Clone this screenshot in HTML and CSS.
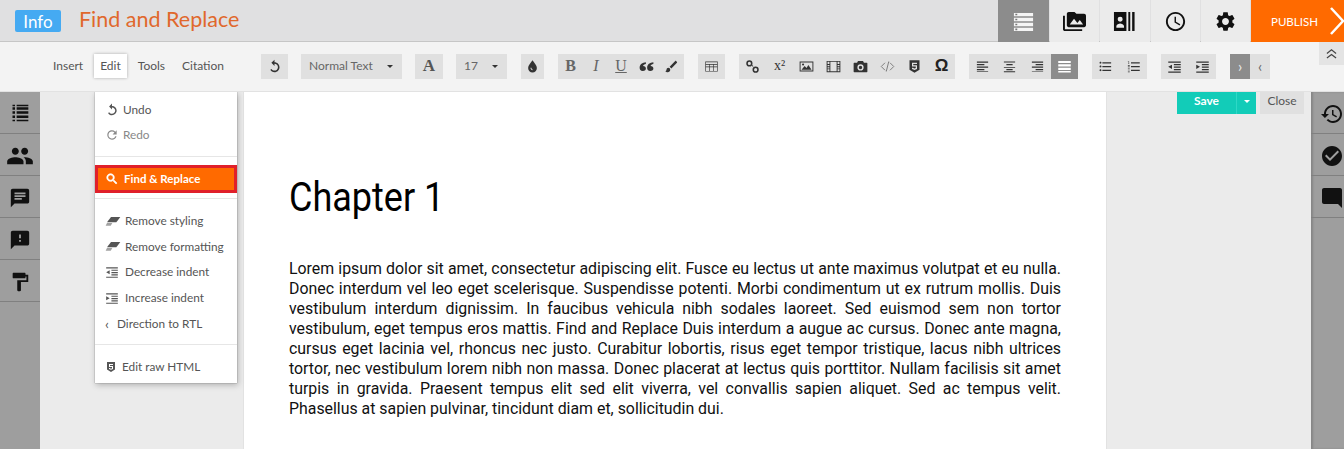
FILE: index.html
```html
<!DOCTYPE html>
<html lang="en">
<head>
    <meta charset="UTF-8">
    <meta name="viewport" content="width=device-width, initial-scale=1.0">
    <title>Find and Replace</title>
    <link rel="stylesheet" href="styles.css">
</head>
<body>
    <svg class="defs" aria-hidden="true">
        <symbol id="i-toc" viewBox="0 0 24 24"><path d="M2 3h20v3.6H2zM2 8.2h20v3.6H2zM2 13.4h20V17H2zM2 18.6h20v3.4H2z"/><path fill="#777" d="M3.5 4h2v1.6h-2zM3.5 9.2h2v1.6h-2zM3.5 14.4h2V16h-2zM3.5 19.4h2V21h-2z"/></symbol>
        <symbol id="i-list" viewBox="0 0 24 24"><path d="M3 5h3v3H3zM8 5h14v3H8zM3 10h3v3H3zM8 10h14v3H8zM3 15h3v3H3zM8 15h14v3H8zM3 20h3v2H3zM8 20h14v2H8zM3 2h3v2H3zM8 2h14v2H8z"/></symbol>
        <symbol id="i-media" viewBox="0 0 24 24"><path d="M2 6H0v5h.01L0 20c0 1.1.9 2 2 2h18v-2H2V6zm20-2h-8l-2-2H6c-1.1 0-1.99.9-1.99 2L4 16c0 1.1.9 2 2 2h16c1.1 0 2-.9 2-2V6c0-1.1-.9-2-2-2zM7 15l4.5-6 3.5 4.51 2.5-3.01L21 15H7z"/></symbol>
        <symbol id="i-contacts" viewBox="0 0 24 24"><path fill-rule="evenodd" d="M1 2h13v20H1zM7.5 7a2.6 2.6 0 1 0 0 5.2a2.6 2.6 0 0 0 0-5.2zM3.5 17v1.5h8V17c0-1.8-2.7-2.8-4-2.8s-4 1-4 2.8z"/><path d="M16 2h2v20h-2zM20 2h2.5v20H20z"/></symbol>
        <symbol id="i-clock" viewBox="0 0 24 24"><path d="M11.99 2C6.47 2 2 6.48 2 12s4.47 10 9.99 10C17.52 22 22 17.52 22 12S17.52 2 11.99 2zM12 20c-4.42 0-8-3.58-8-8s3.58-8 8-8 8 3.58 8 8-3.58 8-8 8zm.5-13H11v6l5.25 3.15.75-1.23-4.5-2.67z"/></symbol>
        <symbol id="i-cog" viewBox="0 0 24 24"><path d="M19.14 12.94c.04-.3.06-.61.06-.94 0-.32-.02-.64-.07-.94l2.03-1.58c.18-.14.23-.41.12-.61l-1.92-3.32c-.12-.22-.37-.29-.59-.22l-2.39.96c-.5-.38-1.03-.7-1.62-.94l-.36-2.54c-.04-.24-.24-.41-.48-.41h-3.84c-.24 0-.43.17-.47.41l-.36 2.54c-.59.24-1.13.57-1.62.94l-2.39-.96c-.22-.08-.47 0-.59.22L2.74 8.87c-.12.21-.08.47.12.61l2.03 1.58c-.05.3-.09.63-.09.94s.02.64.07.94l-2.03 1.58c-.18.14-.23.41-.12.61l1.92 3.32c.12.22.37.29.59.22l2.39-.96c.5.38 1.03.7 1.62.94l.36 2.54c.05.24.24.41.48.41h3.84c.24 0 .44-.17.47-.41l.36-2.54c.59-.24 1.13-.56 1.62-.94l2.39.96c.22.08.47 0 .59-.22l1.92-3.32c.12-.22.07-.47-.12-.61l-2.01-1.58zM12 15.6c-1.98 0-3.6-1.62-3.6-3.6s1.62-3.6 3.6-3.6 3.6 1.62 3.6 3.6-1.62 3.6-3.6 3.6z"/></symbol>
        <symbol id="i-people" viewBox="0 0 24 24"><path d="M16 11c1.66 0 2.99-1.34 2.99-3S17.66 5 16 5c-1.66 0-3 1.34-3 3s1.34 3 3 3zm-8 0c1.66 0 2.99-1.34 2.99-3S9.66 5 8 5C6.34 5 5 6.34 5 8s1.34 3 3 3zm0 2c-2.33 0-7 1.17-7 3.5V19h14v-2.5c0-2.33-4.67-3.5-7-3.5zm8 0c-.29 0-.62.02-.97.05 1.16.84 1.97 1.97 1.97 3.45V19h6v-2.5c0-2.33-4.67-3.5-7-3.5z"/></symbol>
        <symbol id="i-chat" viewBox="0 0 24 24"><path d="M20 2H4c-1.1 0-1.99.9-1.99 2L2 22l4-4h14c1.1 0 2-.9 2-2V4c0-1.1-.9-2-2-2zM6 9h12v2H6V9zm8 5H6v-2h8v2zm4-6H6V6h12v2z"/></symbol>
        <symbol id="i-feedback" viewBox="0 0 24 24"><path d="M20 2H4c-1.1 0-1.99.9-1.99 2L2 22l4-4h14c1.1 0 2-.9 2-2V4c0-1.1-.9-2-2-2zm-7 12h-2v-2h2v2zm0-4h-2V6h2v4z"/></symbol>
        <symbol id="i-paint" viewBox="0 0 24 24"><path d="M18 4V3c0-.55-.45-1-1-1H5c-.55 0-1 .45-1 1v4c0 .55.45 1 1 1h12c.55 0 1-.45 1-1V6h1v4H9v11c0 .55.45 1 1 1h2c.55 0 1-.45 1-1v-9h8V4h-3z"/></symbol>
        <symbol id="i-history" viewBox="0 0 24 24"><path d="M13 3c-4.97 0-9 4.03-9 9H1l3.89 3.89.07.14L9 12H6c0-3.87 3.13-7 7-7s7 3.13 7 7-3.13 7-7 7c-1.93 0-3.68-.79-4.94-2.06l-1.42 1.42C8.27 19.99 10.51 21 13 21c4.97 0 9-4.03 9-9s-4.03-9-9-9zm-1 5v5l4.28 2.54.72-1.21-3.5-2.08V8H12z"/></symbol>
        <symbol id="i-check" viewBox="0 0 24 24"><path d="M12 2C6.48 2 2 6.48 2 12s4.48 10 10 10 10-4.48 10-10S17.52 2 12 2zm-2 15l-5-5 1.41-1.41L10 14.17l7.59-7.59L19 8l-9 9z"/></symbol>
        <symbol id="i-bubble" viewBox="0 0 24 24"><path d="M4 2h16c1.1 0 2 .9 2 2v18l-4-4H4c-1.1 0-2-.9-2-2V4c0-1.1.9-2 2-2z"/></symbol>
        <symbol id="i-undo" viewBox="0 0 24 24"><path d="M12 5V1L7 6l5 5V7.5c3 0 5.5 2.5 5.5 5.5s-2.5 5.5-5.5 5.5c-2 0-3.8-1.1-4.7-2.7l-2 1.2C6.5 19.5 9 21 12 21c4.4 0 8-3.6 8-8s-3.6-8-8-8z"/></symbol>
        <symbol id="i-redo" viewBox="0 0 24 24"><path d="M17.65 6.35A7.96 7.96 0 0 0 12 4c-4.42 0-8 3.58-8 8s3.58 8 8 8c3.73 0 6.84-2.55 7.73-6h-2.08A6 6 0 1 1 12 6c1.66 0 3.14.69 4.22 1.78L13 11h7V4l-2.35 2.35z"/></symbol>
        <symbol id="i-search" viewBox="0 0 24 24"><path d="M15.5 14h-.79l-.28-.27C15.41 12.59 16 11.11 16 9.5 16 5.91 13.09 3 9.5 3S3 5.91 3 9.5 5.91 16 9.5 16c1.61 0 3.09-.59 4.23-1.57l.27.28v.79l5 4.99L20.49 19l-4.99-5zm-6 0C7.01 14 5 11.99 5 9.5S7.01 5 9.5 5 14 7.01 14 9.5 11.99 14 9.5 14z" stroke="currentColor" stroke-width="1.2"/></symbol>
        <symbol id="i-eraser" viewBox="0 0 24 24"><path d="M9 6h14l-6 8H3z"/><path d="M3 15h8l-2.5 4H1z" opacity=".55"/></symbol>
        <symbol id="i-outdent" viewBox="0 0 24 24"><path d="M2 4h20v2H2zM11 8h11v2H11zM11 12h11v2H11zM11 16h11v2H11zM2 20h20v2H2zM8 9v7l-6-3.5z"/></symbol>
        <symbol id="i-indent" viewBox="0 0 24 24"><path d="M2 4h20v2H2zM11 8h11v2H11zM11 12h11v2H11zM11 16h11v2H11zM2 20h20v2H2zM2 9v7l6-3.5z"/></symbol>
        <symbol id="i-html5" viewBox="0 0 24 24"><path fill-rule="evenodd" d="M4 2h16v15l-8 5-8-5zM8 6v6h6v2.5l-2 .8-2-.8V14H8v2l4 1.5 4-1.5v-6h-6V8h6V6z"/></symbol>
        <symbol id="i-drop" viewBox="0 0 24 24"><path d="M12 2c3 4.5 7 8 7 12.5A7 7 0 0 1 5 14.5C5 10 9 6.5 12 2zm-3.2 12c0 2 1.3 3.6 3.2 3.8v-1.6c-1 0-1.7-1.2-1.7-2.2z" fill-rule="evenodd"/></symbol>
        <symbol id="i-quote" viewBox="0 0 24 24"><path d="M11 5C5.5 5.5 1 8.5 1 13.5 1 17 2.5 19 6 19s5-1.8 5-4-1.6-3.8-4.5-3.8c.3-1.500 2-2.700 4.500-3.200zM23 5c-5.500.5-10 3.500-10 8.500 0 3.500 1.500 5.500 5 5.500s5-1.800 5-4-1.600-3.800-4.500-3.800c.3-1.500 2-2.700 4.500-3.200z"/></symbol>
        <symbol id="i-brush" viewBox="0 0 24 24"><path d="M7 14c-1.66 0-3 1.34-3 3 0 1.31-1.16 2-2 2 .92 1.22 2.49 2 4 2 2.21 0 4-1.79 4-4 0-1.66-1.34-3-3-3zm13.71-9.37l-1.34-1.34c-.39-.39-1.02-.39-1.41 0L9 12.25 11.75 15l8.96-8.96c.39-.39.39-1.02 0-1.41z"/></symbol>
        <symbol id="i-table" viewBox="0 0 24 24"><path fill-rule="evenodd" d="M2 4h20v16H2zM3 5v3h18V5zM3 9v3h5.5V9zm6.5 0v3h5V9zm6 0v3H21V9zM3 13v6h5.5v-6zm6.5 0v6h5v-6zm6 0v6H21v-6z"/></symbol>
        <symbol id="i-link" viewBox="0 0 24 24"><path fill-rule="evenodd" d="M7 2a5 5 0 1 1 0 10A5 5 0 0 1 7 2zm0 2.5a2.5 2.5 0 1 0 0 5 2.5 2.5 0 0 0 0-5zM17 12a5 5 0 1 1 0 10 5 5 0 0 1 0-10zm0 2.5a2.5 2.5 0 1 0 0 5 2.5 2.5 0 0 0 0-5z"/><path d="M10.5 10.5l2 2 1-1-2-2z"/></symbol>
        <symbol id="i-photo" viewBox="0 0 24 24"><path fill-rule="evenodd" d="M1 4h22v16H1zM2.5 5.5v13h19v-13zM4 17l5-6 3 3.5 3-5 5 7.5zM6.5 7a1.7 1.7 0 1 1 0 3.4 1.7 1.7 0 0 1 0-3.4z"/></symbol>
        <symbol id="i-film" viewBox="0 0 24 24"><path fill-rule="evenodd" d="M1 3h22v18H1zM2.500 4.500V8h3V4.500zm0 5v2h3v-2zm0 3.500v2h3v-2zm0 3.500v3h3v-3zm4.500-12v15h10v-15zm11.500 0V8h3V4.500zm0 5v2h3v-2zm0 3.500v2h3v-2zm0 3.500v3h3v-3z"/></symbol>
        <symbol id="i-camera" viewBox="0 0 24 24"><path fill-rule="evenodd" d="M8 3h8l1.500 3H22a1 1 0 0 1 1 1v13a1 1 0 0 1-1 1H2a1 1 0 0 1-1-1V7a1 1 0 0 1 1-1h4.500zm4 5.500a5 5 0 1 0 0 10 5 5 0 0 0 0-10zm0 2.300a2.700 2.700 0 1 1 0 5.400 2.700 2.700 0 0 1 0-5.400z"/></symbol>
        <symbol id="i-code" viewBox="0 0 24 24"><path d="M8 6L2 12l6 6M16 6l6 6-6 6M14 4l-4 16" fill="none" stroke="currentColor" stroke-width="1.5"/></symbol>
        <symbol id="i-left" viewBox="0 0 24 24"><path d="M3 4h18v2H3zM3 8h12v2H3zM3 12h18v2H3zM3 16h12v2H3z"/><path d="M3 19.5h18v1H3z"/></symbol>
        <symbol id="i-center" viewBox="0 0 24 24"><path d="M3 4h18v1.500H3zM7 8h10v2H7zM3 13h18v1.500H3zM7 16h10v2H7zM3 19.500h18v1.500H3z"/></symbol>
        <symbol id="i-right" viewBox="0 0 24 24"><path d="M3 4h18v2H3zM9 8h12v2H9zM3 12h18v2H3zM9 16h12v2H9zM3 19.5h18v1H3z"/></symbol>
        <symbol id="i-justify" viewBox="0 0 24 24"><path d="M2 3h20v3.5H2zM2 8.5h20V12H2zM2 14h20v3.5H2zM2 19h20v2.5H2z"/></symbol>
        <symbol id="i-bullets" viewBox="0 0 24 24"><path d="M4 10.5c-.83 0-1.5.67-1.5 1.5s.67 1.5 1.5 1.5 1.5-.67 1.5-1.5-.67-1.5-1.5-1.5zm0-6c-.83 0-1.5.67-1.5 1.5S3.17 7.5 4 7.5 5.5 6.83 5.5 6 4.83 4.5 4 4.5zm0 12c-.83 0-1.5.68-1.5 1.5s.68 1.5 1.5 1.5 1.5-.68 1.5-1.5-.67-1.5-1.5-1.5zM7 19h14v-2H7v2zm0-6h14v-2H7v2zm0-8v2h14V5H7z"/></symbol>
        <symbol id="i-numbers" viewBox="0 0 24 24"><path d="M3 3h2v1H3zM4 5h1v3H4zM3 10h3v1H3zM3 12h3v1H3zM3 15h3v1H3zM3 17h3v1H3zM3 20h3v1H3zM8 5h14v2H8zM8 11h14v2H8zM8 17h14v2H8z"/></symbol>
    </svg>

    <div class="topbar">
        <span class="info-badge">Info</span>
        <span class="page-title">Find and Replace</span>
        <div class="top-tabs">
            <a class="top-tab active"><svg class="white"><use href="#i-toc"/></svg></a>
            <a class="top-tab"><svg><use href="#i-media"/></svg></a>
            <a class="top-tab"><svg><use href="#i-contacts"/></svg></a>
            <a class="top-tab"><svg><use href="#i-clock"/></svg></a>
            <a class="top-tab"><svg><use href="#i-cog"/></svg></a>
            <a class="publish">PUBLISH
                <svg viewBox="0 0 14 28"><path d="M1 1l12 13L1 27" fill="none" stroke="#fff" stroke-width="2.5"/></svg>
            </a>
        </div>
    </div>

    <div class="toolbar">
        <div class="menu-tabs">
            <a>Insert</a>
            <a class="active">Edit</a>
            <a>Tools</a>
            <a>Citation</a>
        </div>
        <div class="tb-groups">
            <div class="tb-group tight w-27"><a><svg><use href="#i-undo"/></svg></a></div>
            <div class="tb-group tight w-101"><a class="select">Normal Text<i class="caret"></i></a></div>
            <div class="tb-group tight w-28"><a class="glyph big">A</a></div>
            <div class="tb-group w-51"><a class="select">17<i class="caret"></i></a></div>
            <div class="tb-group w-23"><a><svg><use href="#i-drop"/></svg></a></div>
            <div class="tb-group w-126">
                <a class="glyph bold">B</a>
                <a class="glyph italic">I</a>
                <a class="glyph under">U</a>
                <a><svg><use href="#i-quote"/></svg></a>
                <a><svg><use href="#i-brush"/></svg></a>
            </div>
            <div class="tb-group w-27"><a><svg><use href="#i-table"/></svg></a></div>
            <div class="tb-group w-216">
                <a><svg><use href="#i-link"/></svg></a>
                <a class="glyph sup">x²</a>
                <a><svg><use href="#i-photo"/></svg></a>
                <a><svg><use href="#i-film"/></svg></a>
                <a><svg><use href="#i-camera"/></svg></a>
                <a><svg class="light"><use href="#i-code"/></svg></a>
                <a><svg><use href="#i-html5"/></svg></a>
                <a class="glyph omega">Ω</a>
            </div>
            <div class="tb-group w-109">
                <a><svg><use href="#i-left"/></svg></a>
                <a><svg><use href="#i-center"/></svg></a>
                <a><svg><use href="#i-right"/></svg></a>
                <a class="on"><svg class="white"><use href="#i-justify"/></svg></a>
            </div>
            <div class="tb-group w-55">
                <a><svg><use href="#i-bullets"/></svg></a>
                <a><svg><use href="#i-numbers"/></svg></a>
            </div>
            <div class="tb-group w-55">
                <a><svg><use href="#i-outdent"/></svg></a>
                <a><svg><use href="#i-indent"/></svg></a>
            </div>
            <div class="tb-group w-40">
                <a class="chev on">›</a>
                <a class="chev">‹</a>
            </div>
        </div>
        <a class="collapse">
            <svg viewBox="0 0 12 12"><path d="M1 6l5-4 5 4M1 11l5-4 5 4" fill="none" stroke="#444" stroke-width="1.3"/></svg>
        </a>
    </div>

    <div class="main">
        <div class="rail">
            <a><svg class="small"><use href="#i-list"/></svg></a>
            <a><svg class="wide"><use href="#i-people"/></svg></a>
            <a><svg><use href="#i-chat"/></svg></a>
            <a><svg><use href="#i-feedback"/></svg></a>
            <a><svg><use href="#i-paint"/></svg></a>
        </div>

        <div class="page">
            <h1>Chapter 1</h1>
            <p>Lorem ipsum dolor sit amet, consectetur adipiscing elit. Fusce eu lectus ut ante maximus volutpat et eu nulla. Donec interdum vel leo eget scelerisque. Suspendisse potenti. Morbi condimentum ut ex rutrum mollis. Duis vestibulum interdum dignissim. In faucibus vehicula nibh sodales laoreet. Sed euismod sem non tortor vestibulum, eget tempus eros mattis. Find and Replace Duis interdum a augue ac cursus. Donec ante magna, cursus eget lacinia vel, rhoncus nec justo. Curabitur lobortis, risus eget tempor tristique, lacus nibh ultrices tortor, nec vestibulum lorem nibh non massa. Donec placerat at lectus quis porttitor. Nullam facilisis sit amet turpis in gravida. Praesent tempus elit sed elit viverra, vel convallis sapien aliquet. Sed ac tempus velit. Phasellus at sapien pulvinar, tincidunt diam et, sollicitudin dui.</p>
        </div>

        <div class="rail right">
            <a><svg><use href="#i-history"/></svg></a>
            <a><svg><use href="#i-check"/></svg></a>
            <a><svg><use href="#i-bubble"/></svg></a>
        </div>

        <div class="dropdown">
            <div class="dd-group first">
                <a class="dd-item"><svg><use href="#i-undo"/></svg>Undo</a>
                <a class="dd-item muted"><svg><use href="#i-redo"/></svg>Redo</a>
            </div>
            <a class="dd-find"><svg><use href="#i-search"/></svg>Find &amp; Replace</a>
            <div class="dd-group middle">
                <a class="dd-item"><svg class="wide"><use href="#i-eraser"/></svg>Remove styling</a>
                <a class="dd-item"><svg class="wide"><use href="#i-eraser"/></svg>Remove formatting</a>
                <a class="dd-item"><svg class="ind"><use href="#i-outdent"/></svg>Decrease indent</a>
                <a class="dd-item"><svg class="ind"><use href="#i-indent"/></svg>Increase indent</a>
                <a class="dd-item"><span class="dd-chev">‹</span>Direction to RTL</a>
            </div>
            <div class="dd-group last">
                <a class="dd-item"><svg class="narrow"><use href="#i-html5"/></svg>Edit raw HTML</a>
            </div>
        </div>

        <div class="save-bar">
            <a class="save">Save</a>
            <a class="save-more"><i class="caret"></i></a>
            <a class="close">Close</a>
        </div>
    </div>
</body>
</html>
```

FILE: styles.css
```css
html, body {
    margin: 0;
    padding: 0;
    height: 449px;
    overflow: hidden;
}
body {
    font-family: Lato, Arial, sans-serif;
    background-color: #ebebeb;
    color: #444;
    font-size: 12px;
}
a {
    display: block;
}
svg {
    fill: currentColor;
}
.defs {
    display: none;
}

/* top bar */
.topbar {
    display: flex;
    align-items: center;
    height: 42px;
    background: #e0e0e1;
    box-sizing: border-box;
    border-bottom: 1px solid #c6c6c6;
    padding-left: 15px;
}
.info-badge {
    width: 46px;
    height: 22px;
    line-height: 24px;
    text-align: center;
    background: #45aaf2;
    color: white;
    border-radius: 2px;
    font-size: 17px;
}
.page-title {
    margin-left: 18px;
    font-size: 21.5px;
    color: #e0682c;
    margin-top: -3px;
}
.top-tabs {
    display: flex;
    gap: 1px;
    margin-left: auto;
    height: 42px;
    align-self: flex-start;
}
.top-tab {
    display: flex;
    align-items: center;
    justify-content: center;
    width: 49.25px;
    background: #ebebeb;
    color: #111;
}
.top-tab svg {
    width: 23px;
    height: 23px;
}
.top-tab.active {
    width: 51px;
    background: #8c8c8c;
}
.top-tab .white {
    color: #f4f4f4;
}
.publish {
    display: flex;
    align-items: center;
    justify-content: space-between;
    width: 93px;
    box-sizing: border-box;
    padding-left: 20px;
    background: #ff6a00;
    color: white;
    font-size: 11.5px;
}
.publish svg {
    width: 14px;
    height: 28px;
}

/* toolbar */
.toolbar {
    display: flex;
    height: 50px;
    box-sizing: border-box;
    background: #f3f3f3;
    border-bottom: 1px solid #e2e2e2;
    padding-left: 46px;
}
.menu-tabs {
    display: flex;
    align-items: center;
    gap: 3px;
    width: 215px;
    height: 48px;
    color: #555;
}
.menu-tabs a {
    padding: 0 7px;
    line-height: 24px;
}
.menu-tabs a.active {
    background: white;
    box-shadow: 0 0 3px rgba(0,0,0,0.3);
    margin: 0 1px 0 1px;
    padding: 0 6px;
}
.tb-groups {
    display: flex;
    gap: 14px;
    margin-top: 12px;
}
.tb-group {
    display: flex;
    height: 25px;
    background: #e0e0e0;
    color: #333;
}
.tb-group.tight {
    margin-right: -1px;
}
.tb-group a {
    flex: 1;
    display: flex;
    align-items: center;
    justify-content: center;
}
.tb-group svg {
    width: 15px;
    height: 15px;
}
.tb-group svg.light {
    color: #777;
}
.tb-group svg.white {
    color: white;
}
.tb-group a.on {
    background: #8c8c8c;
    color: #eee;
}
.w-23 { width: 23px; }
.w-27 { width: 27px; }
.w-28 { width: 28px; }
.w-40 { width: 40px; }
.w-51 { width: 51px; }
.w-55 { width: 55px; }
.w-101 { width: 101px; }
.w-109 { width: 109px; }
.w-126 { width: 126px; }
.w-216 { width: 216px; }
.tb-group a.select {
    justify-content: space-between;
    padding: 0 9px 2px 8px;
    color: #666;
}
.caret {
    display: inline-block;
    width: 0;
    height: 0;
    border-left: 3px solid transparent;
    border-right: 3px solid transparent;
    border-top: 3px solid #333;
    margin-top: 2px;
}
.glyph {
    font-family: "Liberation Serif", serif;
    font-size: 16px;
    padding-bottom: 2px;
}
.glyph.big {
    font-size: 17px;
    font-weight: bold;
    color: #555;
}
.glyph.bold {
    font-weight: bold;
    color: #666;
}
.glyph.italic {
    font-style: italic;
    color: #666;
}
.glyph.under {
    text-decoration: underline;
    color: #666;
}
.glyph.omega {
    font-family: "Liberation Sans", sans-serif;
    font-size: 17px;
    font-weight: bold;
    color: #222;
}
.glyph.sup {
    font-size: 14px;
}
.chev {
    font-size: 15px;
    color: #666;
    padding-bottom: 2px;
}
.chev.on {
    color: white;
}
.collapse {
    display: flex;
    align-items: center;
    justify-content: center;
    width: 25px;
    height: 23px;
    margin-left: auto;
    background: #e4e4e4;
}
.collapse svg {
    width: 11px;
    height: 11px;
}

/* main area */
.main {
    position: relative;
    display: flex;
    height: 357px;
    overflow: hidden;
}
.rail {
    width: 40px;
    background: #9e9e9e;
    color: #111;
    flex: none;
}
.rail a {
    display: flex;
    align-items: center;
    justify-content: center;
    height: 41px;
    border-bottom: 1px solid #808080;
}
.rail svg {
    width: 22px;
    height: 22px;
    margin-top: 2px;
}
.rail svg.small {
    width: 20px;
    height: 20px;
    margin-top: 1px;
}
.rail svg.wide {
    width: 28px;
    height: 28px;
}
.rail.right {
    width: 33px;
    margin-left: 204px;
    box-shadow: inset 2px 0 2px rgba(0,0,0,0.15);
}
.rail.right svg {
    width: 24px;
    height: 24px;
    margin-left: 8px;
}
.page {
    width: 864px;
    margin-left: 203px;
    box-sizing: border-box;
    background: white;
    border-left: 1px solid #e2e2e2;
    border-right: 1px solid #e2e2e2;
    padding: 82px 45px 0;
    flex: none;
    color: #111;
    font-family: Roboto, Arial, sans-serif;
}
.page h1 {
    margin: 0;
    font-size: 40px;
    line-height: 48px;
    font-weight: 400;
    color: #000;
    transform: scaleX(0.9);
    transform-origin: left;
}
.page p {
    margin: 37px 0 0;
    font-size: 15.88px;
    line-height: 20px;
    text-align: justify;
}

/* edit dropdown */
.dropdown {
    position: absolute;
    left: 95px;
    top: 0;
    width: 142px;
    height: 291px;
    background: white;
    box-shadow: 0 0 1px rgba(0,0,0,0.5), 1px 2px 6px rgba(0,0,0,0.25);
    color: #555;
    font-size: 11.8px;
}
.dd-group {
    box-sizing: border-box;
    border-bottom: 1px solid #e6e6e6;
}
.dd-group.first {
    height: 65px;
    padding-top: 5px;
}
.dd-group.first .dd-item {
    height: 25px;
}
.dd-group.middle {
    margin-top: 5px;
    height: 147px;
    padding-top: 9px;
    border-top: 1px solid #e6e6e6;
}
.dd-group.last {
    border-bottom: 0;
    padding-top: 9px;
}
.dd-item {
    display: flex;
    align-items: center;
    height: 25.6px;
    padding-left: 10px;
}
.dd-item svg {
    width: 14px;
    height: 14px;
    margin-right: 4px;
}
.dd-item svg.wide {
    width: 16px;
    height: 16px;
    margin-right: 4px;
}
.dd-item svg.ind {
    width: 14px;
    height: 14px;
    margin-right: 6px;
}
.dd-item svg.narrow {
    width: 12px;
    height: 12px;
    margin-right: 5px;
}
.dd-item.muted {
    color: #888;
}
.dd-chev {
    width: 12px;
    font-size: 14px;
}
.dd-find {
    display: flex;
    align-items: center;
    height: 28px;
    box-sizing: border-box;
    margin-top: 8px;
    padding: 0 0 2px 7px;
    background: #ff6a00;
    border: 3px solid #e0202a;
    color: white;
    font-weight: bold;
    font-size: 11.5px;
}
.dd-find svg {
    width: 14px;
    height: 14px;
    margin: 1px 5px 0 0;
}

/* save and close */
.save-bar {
    position: absolute;
    top: -4px;
    left: 1177px;
    display: flex;
    height: 26px;
    color: white;
}
.save-bar a {
    display: flex;
    align-items: center;
    justify-content: center;
    padding-bottom: 2px;
    box-sizing: border-box;
}
.save {
    width: 59px;
    background: #12ccb8;
    font-weight: bold;
}
.save-more {
    width: 20px;
    background: #12ccb8;
    border-left: 1px solid #2fd8c6;
}
.save-more .caret {
    border-top-color: white;
}
.save-bar .close {
    width: 44px;
    margin: 1px 0 0 4px;
    height: 25px;
    background: #e0e0e0;
    color: #555;
}
```
